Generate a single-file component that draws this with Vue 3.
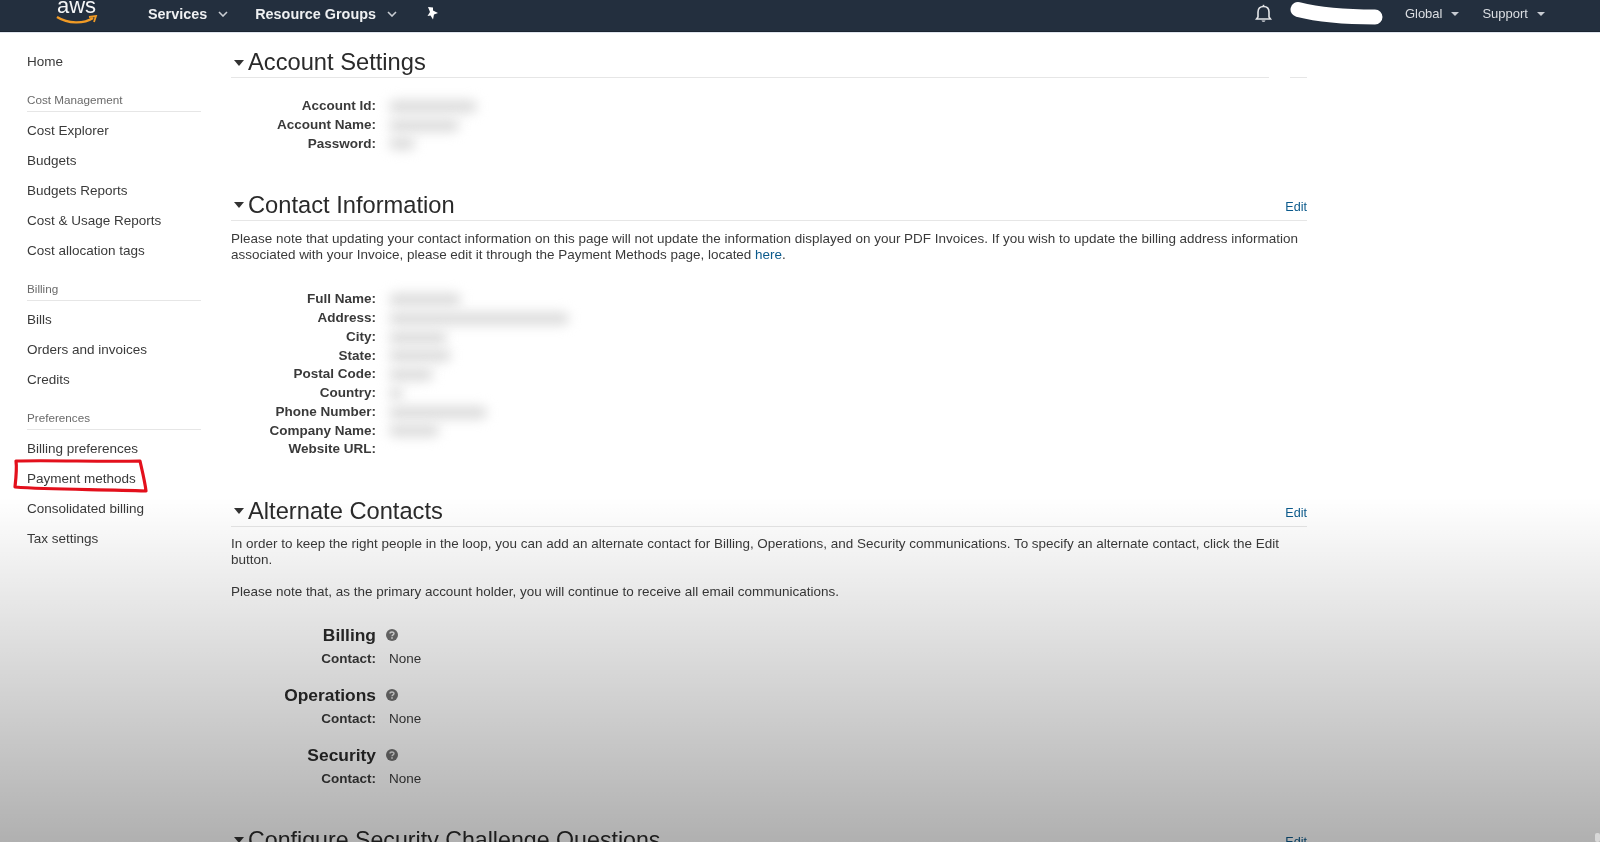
<script setup>
const sideGroups = [
  { title: 'Cost Management', items: ['Cost Explorer', 'Budgets', 'Budgets Reports', 'Cost & Usage Reports', 'Cost allocation tags'] },
  { title: 'Billing', items: ['Bills', 'Orders and invoices', 'Credits'] },
  { title: 'Preferences', items: ['Billing preferences', 'Payment methods', 'Consolidated billing', 'Tax settings'] }
]

const accountRows = [
  { label: 'Account Id:', w: 88 },
  { label: 'Account Name:', w: 70 },
  { label: 'Password:', w: 26 }
]

const contactRows = [
  { label: 'Full Name:', w: 72 },
  { label: 'Address:', w: 180 },
  { label: 'City:', w: 58 },
  { label: 'State:', w: 62 },
  { label: 'Postal Code:', w: 44 },
  { label: 'Country:', w: 14 },
  { label: 'Phone Number:', w: 98 },
  { label: 'Company Name:', w: 50 },
  { label: 'Website URL:', w: 0 }
]

const altContacts = ['Billing', 'Operations', 'Security']
</script>

<template>
  <div class="page">
    <header class="topbar">
      <div class="logo">
        <span class="logo-text">aws</span>
        <svg class="smile" width="42" height="10" viewBox="0 0 42 10">
          <path d="M1 2 C12 9 28 9 37 3" fill="none" stroke="#f09a25" stroke-width="2.4" />
          <path d="M33 2 L40 1 L38 7" fill="none" stroke="#f09a25" stroke-width="1.8" />
        </svg>
      </div>
      <a class="nav-item services">Services</a>
      <svg class="chev" width="10" height="6" viewBox="0 0 10 6"><path d="M1 1 L5 5 L9 1" fill="none" stroke="#c8ccd2" stroke-width="1.6" /></svg>
      <a class="nav-item groups">Resource Groups</a>
      <svg class="chev" width="10" height="6" viewBox="0 0 10 6"><path d="M1 1 L5 5 L9 1" fill="none" stroke="#c8ccd2" stroke-width="1.6" /></svg>
      <svg class="pin" width="14" height="15" viewBox="0 0 14 15">
        <path d="M3 1 L8 1.5 L8 4.5 L13 7 L9 8.5 L8 13.5 L5.5 9.5 L2.5 10 L5 6 Z" fill="#fff" />
      </svg>
      <div class="bar-right">
        <svg class="bell" width="17" height="19" viewBox="0 0 17 19">
          <path d="M3 13 V8 C3 4.5 5.2 2.5 8.5 2.5 C11.8 2.5 14 4.5 14 8 V13 L15.5 15 H1.5 Z" fill="none" stroke="#e4e6e9" stroke-width="1.6" />
          <path d="M6.5 16.5 C7 18.3 10 18.3 10.5 16.5 Z" fill="#e4e6e9" />
          <rect x="7.7" y="0.8" width="1.6" height="2" fill="#e4e6e9" />
        </svg>
        <svg class="scribble" width="96" height="26" viewBox="0 0 96 26">
          <path d="M8 8.5 C30 14 55 16 85 16" fill="none" stroke="#fff" stroke-width="15" stroke-linecap="round" />
        </svg>
        <a class="nav-small global">Global</a>
        <span class="caret"></span>
        <a class="nav-small support">Support</a>
        <span class="caret"></span>
      </div>
    </header>

    <div class="body">
      <aside class="sidebar">
        <a class="side-link home">Home</a>
        <section v-for="group in sideGroups" :key="group.title" class="side-group">
          <div class="side-title">{{ group.title }}</div>
          <a v-for="item in group.items" :key="item" class="side-link">{{ item }}</a>
        </section>
      </aside>

      <main class="content">
        <section class="block account">
          <div class="block-head">
            <h2><span class="tri"></span>Account Settings</h2>
            <span class="line-gap"></span>
          </div>
          <dl class="rows">
            <div v-for="row in accountRows" :key="row.label" class="row">
              <dt>{{ row.label }}</dt>
              <dd><span class="smudge" :style="{ width: row.w + 'px' }"></span></dd>
            </div>
          </dl>
        </section>

        <section class="block contact">
          <div class="block-head">
            <h2><span class="tri"></span>Contact Information</h2>
            <a class="edit">Edit</a>
          </div>
          <p class="note">Please note that updating your contact information on this page will not update the information displayed on your PDF Invoices. If you wish to update the billing address information associated with your Invoice, please edit it through the Payment Methods page, located <a class="link">here</a>.</p>
          <dl class="rows contact-rows">
            <div v-for="row in contactRows" :key="row.label" class="row">
              <dt>{{ row.label }}</dt>
              <dd><span class="smudge" :style="{ width: row.w + 'px' }"></span></dd>
            </div>
          </dl>
        </section>

        <section class="block alternate">
          <div class="block-head">
            <h2><span class="tri"></span>Alternate Contacts</h2>
            <a class="edit">Edit</a>
          </div>
          <p class="note tight">In order to keep the right people in the loop, you can add an alternate contact for Billing, Operations, and Security communications. To specify an alternate contact, click the Edit button.</p>
          <p class="note second">Please note that, as the primary account holder, you will continue to receive all email communications.</p>
          <div v-for="name in altContacts" :key="name" class="alt">
            <div class="alt-head">
              <strong>{{ name }}</strong>
              <svg width="12" height="12" viewBox="0 0 12 12">
                <circle cx="6" cy="6" r="6" fill="#6f6f6f" />
                <path d="M4 4.6 C4 2.4 8 2.4 8 4.5 C8 5.9 6 5.7 6 7.2" fill="none" stroke="#e4e4e4" stroke-width="1.4" />
                <rect x="5.2" y="8.2" width="1.6" height="1.6" fill="#e4e4e4" />
              </svg>
            </div>
            <div class="alt-row"><b>Contact:</b><span>None</span></div>
          </div>
        </section>

        <section class="block security">
          <div class="block-head">
            <h2><span class="tri"></span>Configure Security Challenge Questions</h2>
            <a class="edit">Edit</a>
          </div>
        </section>
      </main>
    </div>

    <!-- hand-drawn marks sitting on top of the screenshot -->
    <svg class="red-mark" width="140" height="40" viewBox="0 0 140 40">
      <path d="M4 3 C40 2 90 4 128 3 C130 12 133 24 134 33 C90 31 40 32 3 29 C4 20 5 10 4 3 Z" fill="none" stroke="#e3101c" stroke-width="3.2" stroke-linejoin="round" />
    </svg>
    <div class="shade"></div>
    <span class="corner-mark"></span>
  </div>
</template>

<style scoped>
.page {
  position: relative;
  width: 1600px;
  height: 842px;
  overflow: hidden;
  background: #fff;
  color: #2b2b2b;
  font-family: "Liberation Sans", Arial, sans-serif;
  filter: blur(0.35px); /* the source is a soft video frame */
}

.topbar {
  display: flex;
  align-items: center;
  height: 27px;
  padding: 0 0 4px 57px;
  background: #232f3e;
  border-top: 1px solid #c9ced4;
  border-bottom: 1px solid #1a2330;
  box-shadow: 0 1px 0 #dfe5ee;
  box-sizing: content-box;
  margin-top: -1px;
  color: #fff;
}

.logo {
  position: relative;
  width: 42px;
  height: 31px;
}

.logo-text {
  position: absolute;
  left: 0;
  top: -5px;
  font-size: 22px;
  line-height: 26px;
  color: #f4f5f6;
}

.smile {
  position: absolute;
  left: -1px;
  top: 17px;
}

.nav-item {
  font-size: 14.4px;
  font-weight: 700;
  color: #eef0f2;
}

.services {
  margin-left: 49px;
}

.chev {
  margin-left: 11px;
  margin-right: 27px;
}

.chev + .groups + .chev {
  margin-right: 0;
}

.pin {
  margin-left: 28px;
}

.bar-right {
  display: flex;
  align-items: center;
  margin-left: auto;
  padding-right: 55px;
}

.scribble {
  margin-left: 18px;
  margin-right: 19px;
}

.nav-small {
  font-size: 13px;
  color: #dcdfe3;
}

.caret {
  width: 0;
  height: 0;
  margin-left: 9px;
  border-left: 4px solid transparent;
  border-right: 4px solid transparent;
  border-top: 4px solid #c8ccd2;
}

.support {
  margin-left: 23px;
}

.body {
  display: flex;
}

.sidebar {
  flex: none;
  width: 201px;
  padding: 15px 0 0 27px;
  box-sizing: border-box;
  margin-right: 30px;
  font-size: 13.5px;
}

.side-link {
  display: block;
  height: 30px;
  line-height: 30px;
  color: #3a3a3a;
}

.side-group {
  margin-top: 13px;
}

.side-title {
  height: 22px;
  line-height: 20px;
  margin-bottom: 4px;
  font-size: 11.7px;
  color: #6a6a6a;
  border-bottom: 1px solid #e6e6e6;
  box-sizing: border-box;
}

.content {
  flex: none;
  width: 1076px;
}

.block-head {
  position: relative;
  display: flex;
  align-items: center;
  justify-content: space-between;
  height: 30px;
  border-bottom: 1px solid #e6e6e6;
}

h2 {
  display: flex;
  align-items: center;
  margin: 0;
  font-size: 23.7px;
  font-weight: 400;
  color: #2a2a2a;
}

.account h2 {
  padding-top: 1px;
}

.security h2 {
  font-size: 23.2px;
}

.tri {
  width: 0;
  height: 0;
  margin: 0 4px 0 3px;
  border-left: 5.5px solid transparent;
  border-right: 5.5px solid transparent;
  border-top: 6px solid #333;
}

.edit {
  margin-top: 3px;
  font-size: 12.6px;
  color: #0b5a8c;
}

.link {
  color: #0b5a8c;
}

.line-gap {
  position: absolute;
  right: 17px;
  bottom: -1px;
  width: 21px;
  height: 1px;
  background: #fff;
}

.account {
  padding-top: 15px;
}

.rows {
  margin: 19px 0 0;
}

.row {
  display: flex;
  height: 18.75px;
  line-height: 18.75px;
  font-size: 13.5px;
}

.row dt {
  flex: none;
  width: 145px;
  font-weight: 700;
  text-align: right;
  color: #3a3a3a;
}

.row dd {
  display: flex;
  align-items: center;
  margin: 0 0 0 13px;
}

.smudge {
  display: block;
  height: 13px;
  background: #dcdcdc;
  border-radius: 6px;
  filter: blur(6px);
}

.contact {
  margin-top: 37px;
}

.note {
  margin: 10px 0 0;
  font-size: 13.47px;
  line-height: 16px;
  color: #3a3a3a;
}

.note.tight {
  margin-top: 9px;
}

.contact-rows {
  margin-top: 27px;
}

.alternate {
  margin-top: 37px;
}

.note.second {
  margin-top: 16px;
}

.alt {
  margin-top: 25px;
}

.alt + .alt {
  margin-top: 19.2px;
}

.alt-head {
  display: flex;
  align-items: center;
  height: 20px;
}

.alt-head strong {
  width: 145px;
  font-size: 17.4px;
  text-align: right;
  color: #2a2a2a;
}

.alt-head svg {
  margin-left: 10px;
}

.alt-row {
  display: flex;
  margin-top: 6px;
  height: 15px;
  line-height: 15px;
  font-size: 13.5px;
}

.alt-row b {
  width: 145px;
  text-align: right;
  color: #3a3a3a;
}

.alt-row span {
  margin-left: 13px;
  color: #3a3a3a;
}

.security {
  margin-top: 39px;
}

.red-mark {
  position: absolute;
  left: 12px;
  top: 458px;
}

/* darkening fade over the lower part of the page */
.shade {
  position: absolute;
  left: 0;
  right: 0;
  top: 497px;
  bottom: 0;
  background: linear-gradient(to bottom, rgba(0, 0, 0, 0), rgba(0, 0, 0, 0.31));
  pointer-events: none;
}

.corner-mark {
  position: absolute;
  right: 0;
  bottom: 0;
  width: 5px;
  height: 9px;
  background: #d8d8d8;
  border-radius: 2px;
}
</style>
